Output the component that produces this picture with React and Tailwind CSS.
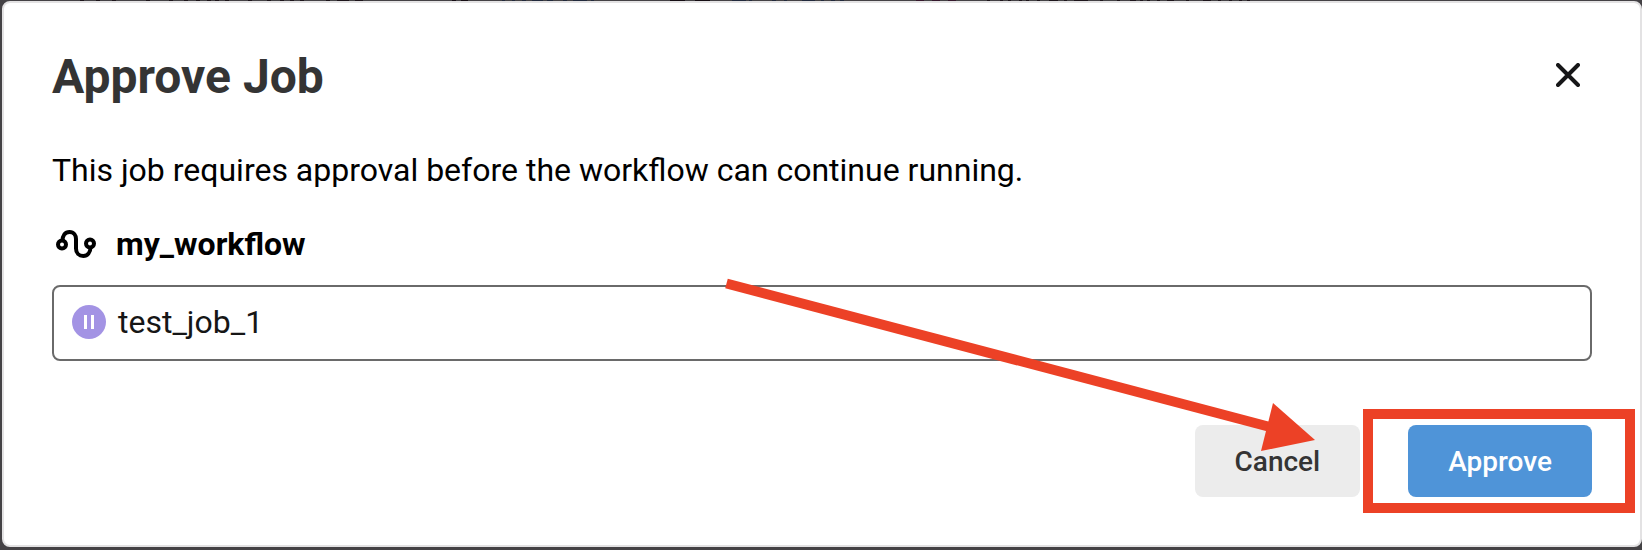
import React, { useState } from 'react';

// Slivers of the dimmed page that show above the dialog: [x, width, color]
const pageMarks = [
  [80, 4, '#1d151b'], [96, 4, '#1d151b'], [112, 4, '#1d151b'], [146, 4, '#1d151b'],
  [169, 4, '#1d151b'], [184, 4, '#1d151b'], [196, 4, '#1d151b'], [207, 4, '#1d151b'],
  [215, 4, '#1d151b'], [225, 4, '#1d151b'], [248, 4, '#1d151b'], [267, 4, '#1d151b'],
  [280, 4, '#1d151b'], [290, 4, '#1d151b'], [300, 4, '#1d151b'], [326, 4, '#1d151b'],
  [337, 12, '#1d151b'], [355, 8, '#1d151b'],
  [452, 4, '#150d13'], [461, 7, '#150d13'],
  [502, 3, '#222a3c'], [512, 3, '#222a3c'], [522, 4, '#222a3c'], [532, 11, '#222a3c'],
  [547, 6, '#222a3c'], [563, 4, '#222a3c'], [573, 14, '#222a3c'], [591, 3, '#222a3c'],
  [670, 15, '#150d13'], [695, 15, '#150d13'],
  [732, 14, '#222a3c'], [749, 3, '#222a3c'], [772, 4, '#222a3c'], [784, 3, '#222a3c'],
  [802, 13, '#222a3c'], [821, 3, '#222a3c'], [831, 4, '#222a3c'], [840, 4, '#222a3c'],
  [916, 8, '#35182c'], [932, 8, '#35182c'], [948, 8, '#35182c'],
  [987, 3, '#1d151b'], [1000, 3, '#1d151b'], [1008, 3, '#1d151b'], [1019, 3, '#1d151b'],
  [1026, 3, '#1d151b'], [1037, 3, '#1d151b'], [1049, 9, '#1d151b'], [1064, 3, '#1d151b'],
  [1074, 14, '#1d151b'], [1100, 3, '#1d151b'], [1117, 3, '#1d151b'], [1130, 6, '#1d151b'],
  [1140, 3, '#1d151b'], [1147, 3, '#1d151b'], [1157, 3, '#1d151b'], [1167, 7, '#1d151b'],
  [1186, 3, '#1d151b'], [1203, 8, '#1d151b'], [1218, 3, '#1d151b'], [1229, 3, '#1d151b'],
  [1239, 3, '#1d151b'], [1247, 3, '#1d151b'],
];

function PageBehind() {
  return (
    <svg className="block h-px w-full" aria-hidden="true" shapeRendering="crispEdges">
      {pageMarks.map(([x, width, color]) => (
        <rect key={x} x={x} y="0" width={width} height="1" fill={color} />
      ))}
    </svg>
  );
}

function CloseIcon() {
  return (
    <svg className="h-6 w-6" viewBox="0 0 24 24" fill="none" stroke="#161618" strokeWidth="4" strokeLinecap="round">
      <path d="M2 2l20 20M22 2L2 22" />
    </svg>
  );
}

function WorkflowIcon() {
  return (
    <svg className="h-7 w-10" viewBox="0 0 40 28" fill="none" stroke="#000" strokeWidth="4" aria-hidden="true">
      <circle cx="6" cy="14.500" r="4" />
      <circle cx="34" cy="13.500" r="4" />
      <path d="M6.500 11C6.500 5.500 9 2 13.500 2S20 5.500 20 9V18.500C20 23 23 26 27.300 26C31.500 26 34.500 22.500 34.500 17" />
    </svg>
  );
}

function OnHoldIcon() {
  return (
    <svg className="h-[34px] w-[34px]" viewBox="0 0 34 34" aria-hidden="true">
      <circle cx="17" cy="17" r="17" fill="#a393e4" />
      <path d="M12 10h3v14h-3zM19 10h3v14h-3z" fill="#fff" />
    </svg>
  );
}

export default function App() {
  const [open, setOpen] = useState(true);
  const close = () => setOpen(false);

  return (
    <div className="min-h-screen bg-[#444245] pb-[3px] font-['Roboto',sans-serif]">
      <PageBehind />
      {open && (
        <div
          role="dialog"
          aria-labelledby="dialog-title"
          className="ml-0.5 rounded-lg border-2 border-[#e3e2e3] bg-white p-12"
        >
          <header className="flex items-start justify-between">
            <h1 id="dialog-title" className="text-[48px] leading-[52px] font-bold text-[#343434]">
              Approve Job
            </h1>
            <button type="button" aria-label="Close" onClick={close} className="mt-3 mr-3 cursor-pointer">
              <CloseIcon />
            </button>
          </header>

          <p className="mt-12 text-[32px] leading-[38px] text-black">
            This job requires approval before the workflow can continue running.
          </p>

          <h2 className="mt-[34px] flex items-center gap-5 pl-1 text-[32px] leading-[42px] font-bold text-black">
            <WorkflowIcon />
            my_workflow
          </h2>
          <div className="mt-5 flex items-center gap-3 rounded-lg border-2 border-[#6a6a6a] px-[18px] pt-[15px] pb-[17px] text-[32px] leading-10 text-[#161616]">
            <OnHoldIcon />
            test_job_1
          </div>

          <footer className="mt-16 flex justify-end gap-12">
            <button
              type="button"
              onClick={close}
              className="cursor-pointer rounded-lg bg-[#ececec] px-10 pt-[17px] pb-[15px] text-[28px] leading-10 font-medium text-[#343434]"
            >
              Cancel
            </button>
            <div className="relative">
              <button
                type="button"
                onClick={close}
                className="cursor-pointer rounded-lg bg-[#4f94d8] px-10 pt-[17px] pb-[15px] text-[28px] leading-10 font-medium text-white"
              >
                Approve
              </button>
              <div className="pointer-events-none absolute -inset-y-4 -right-[43px] -left-[45px] border-10 border-[#ec4126]" />
              <svg
                className="pointer-events-none absolute right-full bottom-9 mr-[88px] h-[180px] w-[600px] max-w-none overflow-visible"
                viewBox="0 0 600 180"
                aria-hidden="true"
              >
                <path d="M6.500 2.500L550 146" stroke="#ec4126" strokeWidth="10" />
                <path d="M553 122L595 159L541 170z" fill="#ec4126" />
              </svg>
            </div>
          </footer>
        </div>
      )}
    </div>
  );
}
